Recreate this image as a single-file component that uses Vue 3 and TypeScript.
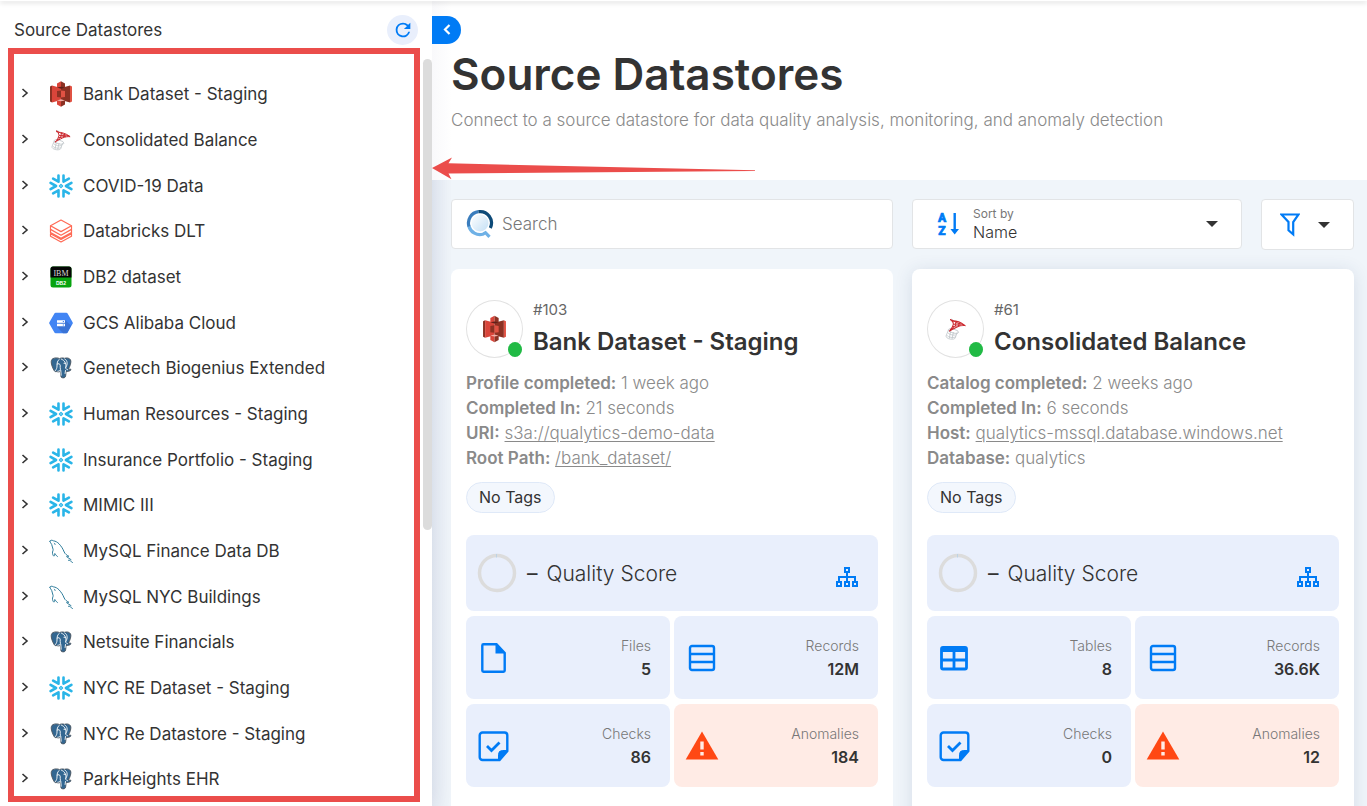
<script setup lang="ts">
import { ref } from 'vue'

type Logo = 's3' | 'mssql' | 'snowflake' | 'databricks' | 'db2' | 'gcs' | 'postgres' | 'mysql'

interface TreeItem {
  name: string
  logo: Logo
}

interface Detail {
  label: string
  value: string
  link?: boolean
}

interface Stat {
  label: string
  value: string
  icon: 'file' | 'table' | 'records' | 'checks' | 'alert'
}

interface Datastore {
  id: string
  name: string
  logo: Logo
  raised: boolean
  details: Detail[]
  stats: Stat[]
}

const tree: TreeItem[] = [
  { name: 'Bank Dataset - Staging', logo: 's3' },
  { name: 'Consolidated Balance', logo: 'mssql' },
  { name: 'COVID-19 Data', logo: 'snowflake' },
  { name: 'Databricks DLT', logo: 'databricks' },
  { name: 'DB2 dataset', logo: 'db2' },
  { name: 'GCS Alibaba Cloud', logo: 'gcs' },
  { name: 'Genetech Biogenius Extended', logo: 'postgres' },
  { name: 'Human Resources - Staging', logo: 'snowflake' },
  { name: 'Insurance Portfolio - Staging', logo: 'snowflake' },
  { name: 'MIMIC III', logo: 'snowflake' },
  { name: 'MySQL Finance Data DB', logo: 'mysql' },
  { name: 'MySQL NYC Buildings', logo: 'mysql' },
  { name: 'Netsuite Financials', logo: 'postgres' },
  { name: 'NYC RE Dataset - Staging', logo: 'snowflake' },
  { name: 'NYC Re Datastore - Staging', logo: 'postgres' },
  { name: 'ParkHeights EHR', logo: 'postgres' },
]

const datastores: Datastore[] = [
  {
    id: '#103',
    name: 'Bank Dataset - Staging',
    logo: 's3',
    raised: false,
    details: [
      { label: 'Profile completed:', value: '1 week ago' },
      { label: 'Completed In:', value: '21 seconds' },
      { label: 'URI:', value: 's3a://qualytics-demo-data', link: true },
      { label: 'Root Path:', value: '/bank_dataset/', link: true },
    ],
    stats: [
      { label: 'Files', value: '5', icon: 'file' },
      { label: 'Records', value: '12M', icon: 'records' },
      { label: 'Checks', value: '86', icon: 'checks' },
      { label: 'Anomalies', value: '184', icon: 'alert' },
    ],
  },
  {
    id: '#61',
    name: 'Consolidated Balance',
    logo: 'mssql',
    raised: true,
    details: [
      { label: 'Catalog completed:', value: '2 weeks ago' },
      { label: 'Completed In:', value: '6 seconds' },
      { label: 'Host:', value: 'qualytics-mssql.database.windows.net', link: true },
      { label: 'Database:', value: 'qualytics' },
    ],
    stats: [
      { label: 'Tables', value: '8', icon: 'table' },
      { label: 'Records', value: '36.6K', icon: 'records' },
      { label: 'Checks', value: '0', icon: 'checks' },
      { label: 'Anomalies', value: '12', icon: 'alert' },
    ],
  },
]

const search = ref('')
const sort = ref('Name')
</script>

<template>
  <svg class="symbols" aria-hidden="true">
    <symbol id="logo-s3" viewBox="0 0 24 26">
      <path d="M1 5.5 3 4.5v17l-2-1z" fill="#8c3123" />
      <path d="M3 4.5 12 7v12l-9 2.500z" fill="#d9453a" />
      <path d="M12 7l9-2.500v17L12 19z" fill="#8c3123" />
      <path d="M21 4.500l2 1v15l-2 1z" fill="#e05243" />
      <path d="M8 2.500 12 0.300V7.500L8 6.500z" fill="#d9453a" />
      <path d="M12 0.300 16 2.500v4l-4 1z" fill="#8c3123" />
      <path d="M8 6.500l4-.8 4 .8-4 1.200z" fill="#5e1f18" />
      <path d="M8 19.500l4-1v7.200l-4-2.200z" fill="#d9453a" />
      <path d="M12 18.500l4 1v4l-4 2.200z" fill="#8c3123" />
      <path d="M8 19.500l4-1.200 4 1.200-4 .8z" fill="#f2b0a9" />
      <path d="M8 10l4-.6v7.200l-4-.6z" fill="#8c3123" />
      <path d="M12 9.400l4 .6v6l-4 .6z" fill="#e05243" />
    </symbol>
    <symbol id="logo-mssql" viewBox="0 0 24 24">
      <g fill="none" stroke="#b9c0c4" stroke-width="0.7">
        <ellipse cx="10" cy="14" rx="5" ry="1.800" transform="rotate(14 10 14)" />
        <path d="M7.500 4.500 8 2.500l1.500.5M5.200 13 3 18.500c-.4 1.500 1.500 2.800 4 3.200 2.500.4 4.500-.1 4.800-1.200l1.800-5.300" />
        <path d="M4.600 15.500c1 1.800 6.500 3.200 8.200 1.800M3.600 18c1.200 2 7 3 8.700 1.300M7.300 14.500 6 21M10 15l-1.300 6.500" />
      </g>
      <g fill="none" stroke="#cc2a30" stroke-width="1">
        <path d="M7 2.800c3 1.200 6 3.200 9.500 4.200 2 .5 4 .9 4.600 1.700-2.500-.3-5.300.2-7.600 1.300-2.700 1.300-5.500 2.800-7.500 4.200 2-2 3.600-4.600 4-6.900C10 5.500 8.500 4 7 2.800z" />
        <path d="M9 4.200c2.800 0 8 1.200 11.500 4M10.200 7.500l6.500-.2M9.200 9.800l8-1.600M12.500 4.900l-1 5.200M15.500 6.300l-1 3M7.800 12l3-1.400" />
      </g>
    </symbol>
    <symbol id="logo-snowflake" viewBox="0 0 24 24">
      <g fill="none" stroke="#29b5e8" stroke-width="2.600" stroke-linecap="round" stroke-linejoin="round">
        <path d="M22.400 8.900 17 12l5.400 3.100M1.600 8.900 7 12l-5.400 3.100" />
        <path d="M22.400 8.900 17 12l5.400 3.100M1.600 8.900 7 12l-5.400 3.100" transform="rotate(60 12 12)" />
        <path d="M22.400 8.900 17 12l5.400 3.100M1.600 8.900 7 12l-5.400 3.100" transform="rotate(120 12 12)" />
        <path d="M12 10.400 13.600 12 12 13.600 10.400 12z" stroke-width="1.200" />
      </g>
    </symbol>
    <symbol id="logo-databricks" viewBox="0 0 24 24">
      <g fill="none" stroke="#ff6a55" stroke-width="1.200" stroke-linejoin="round">
        <path d="M1.500 6.800 12 1l10.500 5.800L12 12.600z" />
        <path d="M1.500 6.800v3.600L12 16.200l10.500-5.800V6.800" />
        <path d="M1.500 10.400 1.500 13.600 12 19.400l10.500-5.800v-3.200" />
        <path d="M22.500 13.600v3.600L12 23 1.500 17.200l0-2.500L12 20.400l10.500-5.800" />
      </g>
    </symbol>
    <symbol id="logo-gcs" viewBox="0 0 24 24">
      <path d="M6.700 1.700h10.600a1.500 1.500 0 0 1 1.300.7l5 8.800a1.500 1.500 0 0 1 0 1.500l-5 8.900a1.500 1.500 0 0 1-1.300.7H6.700a1.500 1.500 0 0 1-1.300-.7L.4 12.700a1.500 1.500 0 0 1 0-1.500l5-8.800a1.500 1.500 0 0 1 1.300-.7z" fill="#4285f4" />
      <path d="M16 9l6 5.600-3.400 7a1.500 1.500 0 0 1-1.300.7H14l-6-6.600z" fill="#3a73d6" />
      <path d="M8 9.200h8v2.500H8zM8 12.700h8v2.500H8z" fill="#ffffff" />
      <path d="M13.800 10h1.200v.9h-1.200zM13.800 13.500h1.200v.9h-1.200z" fill="#4285f4" />
    </symbol>
    <symbol id="logo-postgres" viewBox="0 0 24 24">
      <path d="M4 2.600C6 1.500 9 1.800 10.500 2.600 12 1.800 14 1.800 15.500 2.300 18 1.500 20.500 2 21.600 4c.9 2-.5 6.200-2.200 9 .9.300 2.300 0 2.600.500.2.8-1.800 1.900-3.800 2l-1.200.1c-.1 2.300-.2 4.200-.7 5.300-.6 1.200-3.600 1.400-4.200.1-.6-1.500-.6-4-.6-5.700-1 .6-2.600.9-3.600.2-1 .3-2 .2-2.600-.7C4 12.800 2.600 9.500 2.300 7 2 5 2.500 3.400 4 2.600z" fill="#336791" stroke="#4a545e" stroke-width="0.900" />
      <g fill="none" stroke="#ffffff" stroke-width="0.900" stroke-linecap="round" stroke-linejoin="round">
        <path d="M10.300 3.300C8.300 4.600 8 7 8 10c0 2-.5 3-1.500 4.500" />
        <path d="M8.200 8c1.200-.7 2.700-.3 3 1.200.3 1.600-.3 3.300.2 4.500-.6 1.300-1.600 1.500-2.500 1.500" />
        <path d="M12.500 3.200c3 1 4.800 4.300 4.300 7.500-.2 1.500-.4 2.300 1.700 3" />
        <path d="M15.800 3c3 1.500 3 5.500 1 8.500M11.800 14.300c.3 1.700.2 3.500.3 5M16.500 14.500l-.4 3" />
        <path d="M15 7.300h1.300" />
      </g>
    </symbol>
    <symbol id="logo-mysql" viewBox="0 0 24 24">
      <g fill="none" stroke="#2f7d9c" stroke-width="1" stroke-linecap="round" stroke-linejoin="round">
        <path d="M.8 2.300C1.200.8 3 1 4.300 1.800c2.300.3 4.200 1.400 5.700 3 2.500 2.600 4 5.200 5.200 8.200.8 2 2.800 3.200 4.300 4.200" />
        <path d="M.8 2.300C1.300 3.500 2 4.200 2.700 5.500c.6 1.400.8 3.500 1.400 5 .3.900-.9 2-.6 3.800.2 1.200.8 2.500 1.300 2.800.8.200.6-1.700 1-2.600.5.500 1.200 2 2.600 3" />
        <path d="M19.500 17.200c-1 .1-1.700 0-2 .4.700.8 2.300 1.200 3.200 2.200M19.500 21.200c1.200-.2 3.100 1.400 4 2.400M20.700 19.800l1.300.8" />
        <path d="M5.400 4.200c.3.300.6.700.7 1.200" />
      </g>
    </symbol>
  </svg>

  <div class="app">
    <div class="topbar"></div>

    <aside class="sidebar">
      <header class="sidebar-head">
        <span>Source Datastores</span>
        <button class="refresh" type="button" aria-label="Refresh">
          <svg width="22" height="22" viewBox="0 0 24 24">
            <path d="M17.650 6.350A7.960 7.960 0 0 0 12 4a8 8 0 1 0 7.730 10h-2.080A6 6 0 1 1 12 6c1.660 0 3.140.69 4.220 1.780L13 11h7V4z" fill="#007bf5" />
          </svg>
        </button>
      </header>
      <ul class="tree">
        <li v-for="item in tree" :key="item.name">
          <button type="button" class="tree-row">
            <svg class="chevron" width="8" height="10" viewBox="0 0 8 10"><path d="M1.500 1 6 5 1.500 9" /></svg>
            <svg v-if="item.logo === 'db2'" class="tree-logo" viewBox="0 0 24 24">
              <rect x="1.500" y="1.500" width="21" height="21" rx="2.500" fill="#07a30f" />
              <path d="M1.500 12.500V4A2.500 2.500 0 0 1 4 1.500h16A2.500 2.500 0 0 1 22.500 4v8.500z" fill="#050505" />
              <text x="12" y="10.500" text-anchor="middle" font-family="Liberation Serif, serif" font-size="8" fill="#d8d8d8">IBM</text>
              <text x="12" y="19.500" text-anchor="middle" font-family="Liberation Sans, sans-serif" font-weight="700" font-size="5" fill="#ffffff">DB2</text>
            </svg>
            <svg v-else class="tree-logo"><use :href="'#logo-' + item.logo" /></svg>
            <span>{{ item.name }}</span>
          </button>
        </li>
      </ul>
      <div class="thumb"></div>
      <div class="frame"></div>
    </aside>

    <main class="main">
      <button class="collapse" type="button" aria-label="Collapse panel">
        <svg width="10" height="12" viewBox="0 0 10 12"><path d="M7.500 1 3 5.500 7.500 10" fill="none" stroke="#ffffff" stroke-width="2.200" /></svg>
      </button>

      <header class="hero">
        <h1>Source Datastores</h1>
        <p>Connect to a source datastore for data quality analysis, monitoring, and anomaly detection</p>
      </header>

      <section class="content">
        <div class="box search">
          <svg width="28" height="30" viewBox="0 0 28 30" fill="none" stroke-width="3.200">
            <defs>
              <linearGradient id="lens" x1="0" y1="0" x2="1" y2="1">
                <stop offset="0" stop-color="#ffffff" />
                <stop offset="1" stop-color="#c3dff5" />
              </linearGradient>
            </defs>
            <circle cx="14" cy="14" r="8.500" fill="url(#lens)" />
            <path d="M2.800 17A11.400 11.400 0 0 0 17.500 24.900l2-1.200 4 4.200" stroke="#6fb1e6" />
            <path d="M3 17.500A11.400 11.400 0 0 1 12.500 2.700" stroke="#3a7dbd" />
            <path d="M12.500 2.700A11.400 11.400 0 0 1 24.300 19" stroke="#0d4a78" />
          </svg>
          <input v-model="search" type="text" placeholder="Search" aria-label="Search" />
        </div>

        <div class="tools">
          <div class="box sort">
            <svg width="24" height="30" viewBox="0 0 24 30" fill="#007bf5">
              <text x="5" y="13" text-anchor="middle" font-family="Roboto, sans-serif" font-weight="900" font-size="12" stroke="#007bf5" stroke-width="0.600">A</text>
              <text x="5" y="26" text-anchor="middle" font-family="Roboto, sans-serif" font-weight="900" font-size="12" stroke="#007bf5" stroke-width="0.600">Z</text>
              <path d="M16.500 4h2.400v16H22l-4.300 5.500L13.400 20h3.100z" />
            </svg>
            <div class="sort-field">
              <label for="sort-by">Sort by</label>
              <select id="sort-by" v-model="sort">
                <option>Name</option>
              </select>
            </div>
            <svg class="caret" width="12" height="6" viewBox="0 0 12 6"><path d="M0 0h12L6 6z" /></svg>
          </div>
          <button class="box filter" type="button" aria-label="Filter">
            <svg width="20" height="24" viewBox="0 0 20 24" fill="none" stroke="#007bf5" stroke-width="2.200">
              <path d="M1.500 1.500h17l-5.300 7.500v12.300l-4.700-4V9z" />
            </svg>
            <svg class="caret" width="12" height="6" viewBox="0 0 12 6"><path d="M0 0h12L6 6z" /></svg>
          </button>
        </div>

        <article v-for="store in datastores" :key="store.id" class="card" :class="{ raised: store.raised }">
          <div class="card-head">
            <div class="avatar">
              <svg><use :href="'#logo-' + store.logo" /></svg>
              <i class="status"></i>
            </div>
            <div class="ident">
              <span>{{ store.id }}</span>
              <h2>{{ store.name }}</h2>
            </div>
          </div>

          <ul class="details">
            <li v-for="d in store.details" :key="d.label">
              <b>{{ d.label }}</b>
              {{ ' ' }}
              <a v-if="d.link" href="#">{{ d.value }}</a>
              <span v-else>{{ d.value }}</span>
            </li>
          </ul>

          <span class="tag">No Tags</span>

          <div class="tiles">
            <div class="tile quality">
              <svg width="40" height="40" viewBox="0 0 40 40">
                <circle cx="20" cy="20" r="17.500" fill="none" stroke="#dcdcdc" stroke-width="3.500" />
                <path d="M19.500 1v3.500" stroke="#bcd3e6" stroke-width="1" />
              </svg>
              <span class="dash">–</span>
              <span class="quality-label">Quality Score</span>
              <button type="button" class="lineage" aria-label="Lineage">
                <svg width="24" height="22" viewBox="0 0 24 22" fill="none" stroke="#007bf5" stroke-width="2">
                  <path d="M10 2h4v4h-4zM2 16h4v4H2zM10 16h4v4h-4zM18 16h4v4h-4zM12 6v10M4 16v-5h16v5" />
                </svg>
              </button>
            </div>

            <div v-for="s in store.stats" :key="s.label" class="tile stat" :class="s.icon">
              <svg v-if="s.icon === 'file'" width="34" height="34" viewBox="0 0 34 34">
                <path d="M5.300 4.500a1.200 1.200 0 0 1 1.200-1.200h13L27.700 12v17.500a1.200 1.200 0 0 1-1.200 1.200h-20a1.200 1.200 0 0 1-1.200-1.200z" fill="none" stroke="#007bf5" stroke-width="2.400" />
                <path d="M18.500 3v9.500H28z" fill="#007bf5" />
              </svg>
              <svg v-else-if="s.icon === 'records'" width="34" height="34" viewBox="0 0 34 34" fill="none" stroke="#007bf5" stroke-width="2.400">
                <rect x="5" y="5" width="24" height="24" rx="2" />
                <path d="M5 13h24M5 21h24" />
              </svg>
              <svg v-else-if="s.icon === 'table'" width="34" height="34" viewBox="0 0 34 34" fill="none" stroke="#007bf5" stroke-width="2.800">
                <rect x="3.500" y="6.500" width="25" height="21.500" rx="1.500" />
                <path d="M4 8.500h24" stroke-width="5" />
                <path d="M3.500 19h25M16 8v20" />
              </svg>
              <svg v-else-if="s.icon === 'checks'" width="34" height="34" viewBox="0 0 34 34" fill="none" stroke="#007bf5">
                <path d="M5.500 3.500h22a2.800 2.800 0 0 1 2.800 2.800V22L22.500 31h-17a2.800 2.800 0 0 1-2.800-2.800V6.300A2.800 2.800 0 0 1 5.500 3.500z" stroke-width="2.400" />
                <path d="M10 17l4.500 4.500 8-8" stroke-width="2.800" />
                <path d="M30.500 21.500h-5a4 4 0 0 0-4 4V32z" fill="#007bf5" />
              </svg>
              <svg v-else width="34" height="34" viewBox="0 0 34 34">
                <path d="M17 2.500 33.300 30.500H.7z" fill="#ff4814" />
                <path d="M15.300 12.500h3.400v8h-3.400zM15.300 23h3.400v3.400h-3.400z" fill="#ffece6" />
              </svg>
              <div class="stat-text">
                <span>{{ s.label }}</span>
                <strong>{{ s.value }}</strong>
              </div>
            </div>
          </div>
        </article>
      </section>

      <svg class="arrow" width="326" height="26" viewBox="0 0 326 26">
        <path d="M1 12 21 1.500l-3.500 5.800L324 14.200v.8L17.500 17.600l3 5.700z" fill="#eb4d4b" />
      </svg>
    </main>
  </div>
</template>

<style>
body {
  overflow: hidden;
}
</style>

<style scoped>
* {
  box-sizing: border-box;
}

.symbols {
  position: absolute;
  width: 0;
  height: 0;
}

.app {
  display: flex;
  height: 100vh;
  overflow: hidden;
  background: #f0f5fa;
  color: #333333;
  font-family: Inter, "Open Sans", sans-serif;
  font-size: 16px;
}

button,
input,
select {
  border: 0;
  padding: 0;
  background: none;
  color: inherit;
  font: inherit;
}

svg {
  display: block;
  flex: none;
}

ul {
  margin: 0;
  padding: 0;
  list-style: none;
}

.topbar {
  position: absolute;
  inset: 0 0 auto;
  z-index: 5;
  height: 1px;
  background: #ffffff;
  box-shadow: 0 1px 5px rgba(0, 0, 0, 0.4);
}

.sidebar {
  position: relative;
  z-index: 2;
  flex: none;
  width: 432px;
  background: #ffffff;
  box-shadow: 0 0 20px rgba(40, 50, 110, 0.1);
  font-size: 17px;
}

.sidebar-head {
  display: flex;
  align-items: center;
  justify-content: space-between;
  height: 60px;
  padding: 0 14px;
}

.refresh {
  display: grid;
  place-items: center;
  width: 31px;
  height: 30px;
  border-radius: 50%;
  background: #e9effc;
}

.tree {
  padding-top: 11px;
}

.tree-row {
  display: flex;
  align-items: center;
  width: 100%;
  height: 46px;
  padding-left: 21px;
  text-align: left;
}

.tree li:nth-child(3n) .tree-row {
  height: 45px;
}

.chevron {
  margin: 0 20px 2px 0;
  fill: none;
  stroke: #333333;
  stroke-width: 1.6;
}

.tree-logo {
  width: 24px;
  height: 26px;
  margin-right: 10px;
}

.thumb {
  position: absolute;
  top: 59px;
  right: 0;
  width: 9px;
  height: 471px;
  border-radius: 5px;
  background: #dcdcdc;
}

.frame {
  position: absolute;
  inset: 48px 12px 4px 8px;
  border: 6px solid #eb4d4b;
  pointer-events: none;
}

.main {
  position: relative;
  z-index: 3;
  flex: 1;
  min-width: 0;
  background: linear-gradient(90deg, rgba(40, 50, 110, 0.05), transparent 20px);
}

.collapse {
  position: absolute;
  top: 16px;
  left: 0;
  display: grid;
  place-items: center;
  width: 29px;
  height: 28px;
  border-radius: 0 14px 14px 0;
  background: #007bf5;
}

.hero {
  height: 180px;
  padding: 46px 19px 0;
  background: linear-gradient(90deg, #f9f9fb, #ffffff 20px);
}

.hero h1 {
  margin: 0;
  font-size: 44px;
  font-weight: 600;
  line-height: 56px;
}

.hero p {
  margin: 8px 0 0;
  color: #8a8a8a;
  font-size: 17px;
  font-weight: 300;
  line-height: 20px;
}

.content {
  display: grid;
  grid-template-columns: 1fr 1fr;
  gap: 19px;
  padding: 19px 13px 0 19px;
}

.box {
  display: flex;
  align-items: center;
  height: 50px;
  border: 1px solid #e2e4e6;
  border-radius: 4px;
  background: #ffffff;
}

.search {
  gap: 8px;
  padding: 0 14px;
}

.search input {
  flex: 1;
  min-width: 0;
  outline: 0;
  font-size: 17px;
  font-weight: 300;
}

.search input::placeholder {
  color: #777777;
  opacity: 1;
}

.tools {
  display: flex;
  gap: 19px;
}

.sort {
  flex: 1;
  gap: 12px;
  padding: 0 23px 0 24px;
}

.sort-field {
  display: flex;
  flex: 1;
  flex-direction: column;
  margin-bottom: 2px;
}

.sort-field label {
  color: #777777;
  font-size: 12px;
  line-height: 17px;
}

.sort-field select {
  appearance: none;
  height: 20px;
  font-weight: 300;
  outline: 0;
}

.caret {
  fill: #333333;
}

.filter {
  justify-content: space-between;
  width: 93px;
  height: 51px;
  padding: 0 23px 0 18px;
}

.card {
  height: 560px;
  padding: 31px 15px 0;
  border-radius: 8px;
  background: #ffffff;
}

.raised {
  box-shadow: 0 2px 18px rgba(40, 60, 110, 0.13);
}

.card-head {
  display: flex;
  gap: 10px;
}

.avatar {
  position: relative;
  display: grid;
  place-items: center;
  width: 57px;
  height: 58px;
  border: 1px solid #e2e2e2;
  border-radius: 50%;
}

.avatar svg {
  width: 25px;
  height: 28px;
}

.status {
  position: absolute;
  right: 0;
  bottom: 0;
  width: 14px;
  height: 15px;
  border-radius: 50%;
  background: #21ba45;
}

.ident span {
  display: block;
  color: #666666;
  font-size: 15px;
  line-height: 20px;
}

.ident h2 {
  margin: 5px 0 0;
  font-size: 24px;
  font-weight: 600;
  line-height: 34px;
}

.details {
  margin-top: 12px;
  color: #8a8a8a;
  font-size: 17px;
  font-weight: 300;
  line-height: 25px;
}

.details b {
  font-weight: 600;
}

.details a {
  color: inherit;
  text-underline-offset: 2px;
}

.tag {
  display: inline-block;
  height: 31px;
  margin-top: 11px;
  padding: 0 12px;
  border: 1px solid #dfe9f8;
  border-radius: 16px;
  background: #f3f7fd;
  line-height: 29px;
}

.tiles {
  display: grid;
  grid-template-columns: 1fr 1fr;
  gap: 5px 4px;
  margin-top: 22px;
}

.tile {
  display: flex;
  align-items: center;
  border-radius: 8px;
  background: #e9effc;
}

.quality {
  grid-column: 1 / -1;
  height: 76px;
  padding: 0 19px 0 11px;
  font-size: 21px;
}

.dash {
  margin: 0 9px 0 10px;
}

.quality-label {
  flex: 1;
  font-weight: 300;
}

.lineage {
  margin-top: 8px;
}

.stat {
  justify-content: space-between;
  height: 83px;
  padding: 0 19px 0 11px;
}

.alert {
  background: #ffebe5;
}

.stat-text {
  display: flex;
  flex-direction: column;
  text-align: right;
}

.stat-text span {
  color: #777777;
  font-size: 14px;
  font-weight: 300;
  line-height: 22px;
}

.stat-text strong {
  font-size: 16px;
  font-weight: 600;
  line-height: 24px;
}

.arrow {
  position: absolute;
  top: 156px;
  left: -1px;
  pointer-events: none;
}
</style>
